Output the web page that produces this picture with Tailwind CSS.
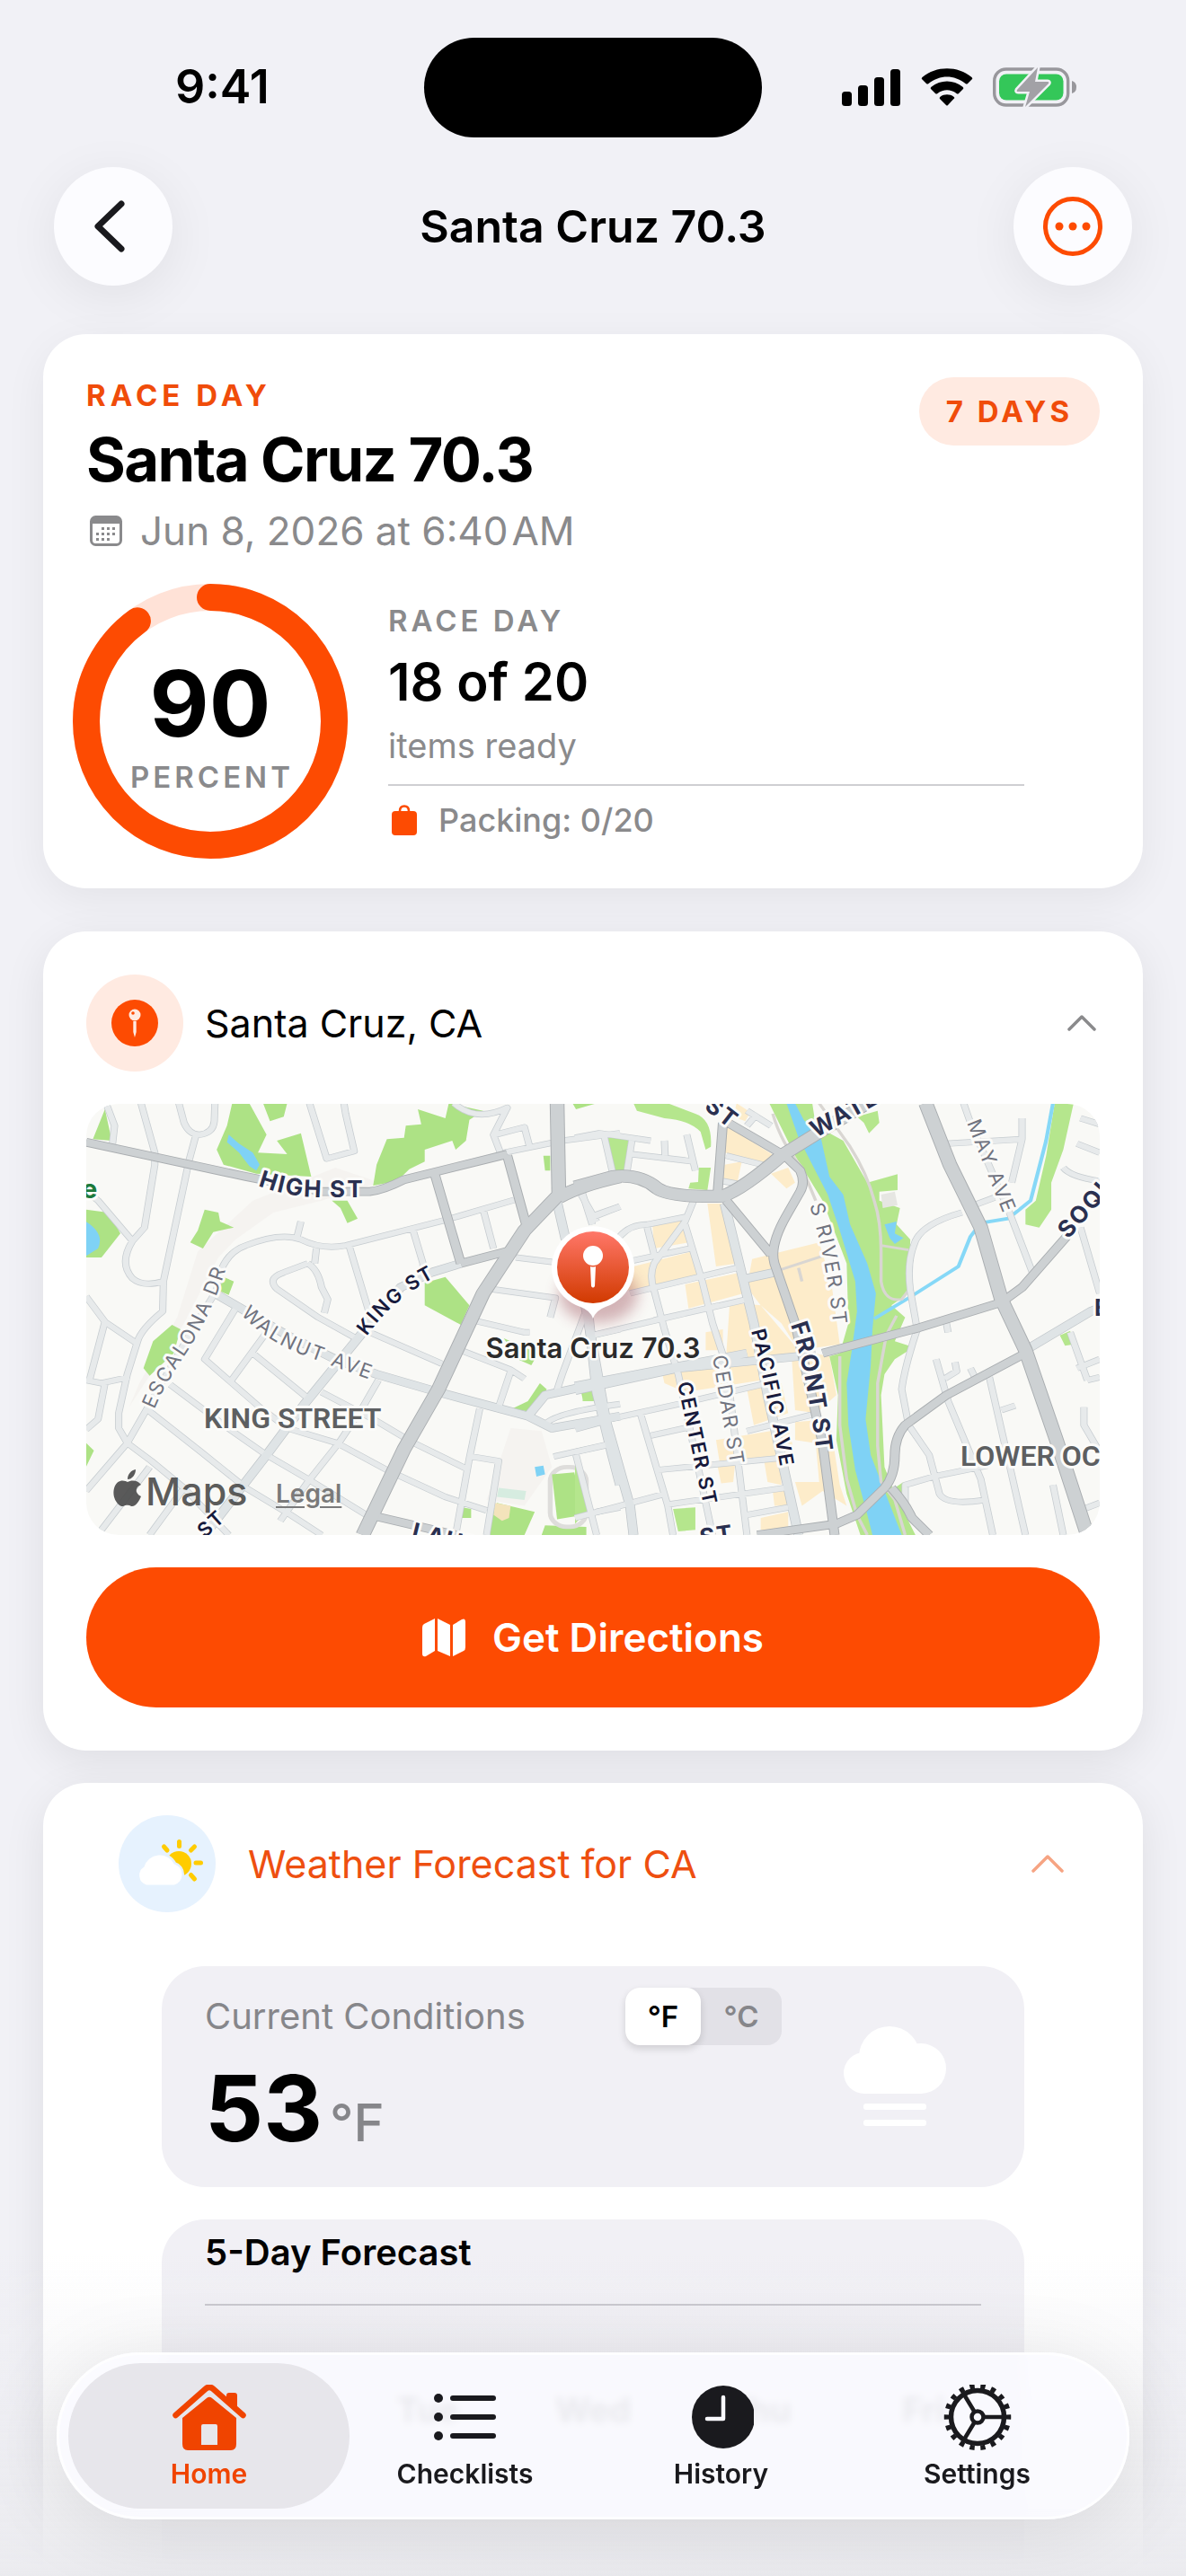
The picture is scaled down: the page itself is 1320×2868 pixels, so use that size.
<!DOCTYPE html>
<html lang="en">
<head>
<meta charset="utf-8">
<meta name="viewport" content="width=device-width, initial-scale=1">
<title>Santa Cruz 70.3</title>
<script src="https://cdn.jsdelivr.net/npm/@tailwindcss/browser@4"></script>
</head>
<body class="bg-[#f1f1f6] font-['Inter',sans-serif] text-black">
<div class="relative flex min-h-screen flex-col overflow-hidden px-12">

  <!-- Status bar -->
  <div class="grid h-[186px] shrink-0 grid-cols-[1fr_376px_1fr] items-center pt-2">
    <div class="pl-[147px] text-[52px] leading-[60px] font-semibold">9:41</div>
    <div class="h-[111px] rounded-full bg-black"></div>
    <div class="flex items-center justify-end gap-[22px] pr-[73px]">
      <svg class="h-[42px] w-[66px]" viewBox="0 0 66 42" aria-hidden="true"><rect y="26" width="11" height="16" rx="3.5"/><rect x="18" y="19" width="11" height="23" rx="3.5"/><rect x="36" y="10" width="11" height="32" rx="3.5"/><rect x="54" y="1" width="11" height="41" rx="3.5"/></svg>
      <svg class="h-[42px] w-[58px]" viewBox="0 0 58 42" aria-hidden="true"><path d="M1.5 12.500Q0 11.500 1.500 10C17-3 41-3 56.500 10q1.500 1.500 0 2.500L52 17q-1.200 1-2.500 0C37 7 21 7 8.500 17Q7.200 18 6 17Z"/><path d="M11 23Q10 22 11.500 20.700C22 12.500 36 12.500 46.500 20.700 48 22 47 23 46.500 23.500L42 28q-1.200 1-2.500 0C33 23 25 23 18.500 28q-1.300 1-2.500 0Z"/><path d="M21 34Q20 33 21.500 31.700C26 28.500 32 28.500 36.500 31.700 38 33 37 33.500 36.500 34L30 41q-1 1-2 0Z"/></svg>
      <svg class="h-[46px] w-[94px]" viewBox="0 0 94 46" aria-hidden="true"><rect x="1.700" y="3" width="82" height="40" rx="13" fill="none" stroke="#98979c" stroke-width="3.400"/><path d="M88 16q5 1.500 5 7t-5 7Z" fill="#98979c"/><rect x="7" y="8.500" width="71.500" height="29" rx="8" fill="#34c759"/><path d="M50 1 27 26q-1 2 1 2h13l-5 17L62 19q1-2-1-2H47Z" fill="#a2a1a6" stroke="#f1f1f6" stroke-width="5" paint-order="stroke" stroke-linejoin="round"/></svg>
    </div>
  </div>

  <!-- Navigation bar -->
  <header class="flex h-[132px] shrink-0 items-center justify-between px-3">
    <button type="button" aria-label="Back" class="flex size-[132px] items-center justify-center rounded-full bg-[#fcfcff] pr-2 shadow-[0_12px_60px_rgba(0,0,0,0.07)]">
      <svg class="h-[60px] w-9" viewBox="0 0 36 60" fill="none" stroke="#1a1a1e" stroke-width="7" stroke-linecap="round" stroke-linejoin="round" aria-hidden="true"><path d="M31 5 5 30l26 25"/></svg>
    </button>
    <h1 class="text-[50px] leading-[60px] font-semibold">Santa Cruz 70.3</h1>
    <button type="button" aria-label="More" class="flex size-[132px] items-center justify-center rounded-full bg-[#fcfcff] shadow-[0_12px_60px_rgba(0,0,0,0.07)]">
      <svg class="size-[66px]" viewBox="0 0 66 66" aria-hidden="true"><circle cx="33" cy="33" r="30.500" fill="none" stroke="#fd4b02" stroke-width="5"/><g fill="#fd4b02"><circle cx="18" cy="33" r="4.500"/><circle cx="33" cy="33" r="4.500"/><circle cx="48" cy="33" r="4.500"/></g></svg>
    </button>
  </header>

  <main class="flex grow flex-col pt-[54px]">

    <!-- Race summary -->
    <section class="rounded-[48px] bg-white px-12 pt-12 pb-[33px] shadow-[0_12px_48px_rgba(0,0,0,0.06)]">
      <div class="flex items-start justify-between">
        <div>
          <p class="text-[33px] leading-[40px] font-bold tracking-[5px] text-[#f04c0a]">RACE DAY</p>
          <h2 class="mt-2 text-[67px] leading-[88px] font-bold tracking-tight">Santa Cruz 70.3</h2>
          <p class="mt-2 flex items-center gap-5 text-[44px] leading-[54px] text-[#8a8a8c]">
            <svg class="ml-1 h-[34px] w-9" viewBox="0 0 36 34" aria-hidden="true"><rect x="1.500" y="1.500" width="33" height="31" rx="5" fill="none" stroke="#8a8a8c" stroke-width="3"/><path d="M2 2h32v7H2z" fill="#8a8a8c"/><g fill="#8a8a8c"><path d="M13 13h3v3h-3zM19 13h3v3h-3zM25 13h3v3h-3zM7 19h3v3H7zM13 19h3v3h-3zM19 19h3v3h-3zM25 19h3v3h-3zM7 25h3v3H7zM13 25h3v3h-3zM19 25h3v3h-3z"/></g></svg>
            Jun 8, 2026 at 6:40&#8202;AM
          </p>
        </div>
        <span class="rounded-full bg-[#ffeae1] px-[30px] py-[18px] text-[33px] leading-[40px] font-bold tracking-[4px] text-[#f04c0a]">7 DAYS</span>
      </div>
      <div class="mt-[47px] flex items-center gap-[60px] pb-[15px]">
        <div class="relative flex size-[276px] shrink-0 flex-col items-center justify-center pt-3">
          <svg class="absolute inset-0 size-full overflow-visible" viewBox="0 0 276 276" fill="none" stroke-width="30" aria-hidden="true"><circle cx="138" cy="138" r="138" stroke="#ffe2d7"/><circle cx="138" cy="138" r="138" stroke="#fd4b02" stroke-linecap="round" pathLength="100" stroke-dasharray="90 100" transform="rotate(-90 138 138)"/></svg>
          <span class="relative text-[102px] leading-[100px] font-bold">90</span>
          <span class="relative mt-3 pl-1 text-[33px] leading-[40px] font-semibold tracking-[4px] text-[#8a8a8c]">PERCENT</span>
        </div>
        <div class="grow pr-[84px]">
          <p class="text-[33px] leading-[40px] font-semibold tracking-[4px] text-[#8a8a8c]">RACE DAY</p>
          <p class="mt-3 text-[58px] leading-[72px] font-semibold">18 of 20</p>
          <p class="mt-[10px] text-[38px] leading-[50px] text-[#8a8a8c]">items ready</p>
          <hr class="mt-[18px] border-t-2 border-[#cfcfd2]">
          <p class="mt-4 flex items-center gap-6 text-[36px] leading-[44px] font-medium text-[#8a8a8c]">
            <svg class="ml-1 h-[34px] w-7" viewBox="0 0 28 34" aria-hidden="true"><rect y="7" width="28" height="27" rx="4" fill="#fd4b02"/><path d="M9 10V7q0-5.500 5-5.500T19 7v3" fill="none" stroke="#fd4b02" stroke-width="2.600"/></svg>
            Packing: 0/20
          </p>
        </div>
      </div>
    </section>

    <!-- Location -->
    <section class="mt-12 rounded-[48px] bg-white p-12 shadow-[0_12px_48px_rgba(0,0,0,0.08)]">
      <button type="button" aria-expanded="true" class="flex w-full items-center text-left">
        <span class="flex size-[108px] items-center justify-center rounded-full bg-[#ffeae1]">
          <svg class="size-[52px]" viewBox="0 0 52 52" aria-hidden="true"><circle cx="26" cy="26" r="26" fill="#fd4b02"/><circle cx="26" cy="17" r="6.500" fill="#ffeae1"/><circle cx="24" cy="15" r="1.800" fill="#fd4b02"/><path d="M24.300 24h3.400v12L26 42l-1.700-6Z" fill="#ffeae1"/></svg>
        </span>
        <span class="grow pl-6 text-[43px] leading-[60px]">Santa Cruz, CA</span>
        <svg class="mr-1 h-[18px] w-8" viewBox="0 0 32 18" fill="none" stroke="#8a8a8c" stroke-width="3.500" stroke-linecap="round" stroke-linejoin="round" aria-hidden="true"><path d="M2 16 16 2l14 14"/></svg>
      </button>

      <div class="relative mt-9 h-[480px] overflow-hidden rounded-[36px]">
        <svg class="size-full font-['Inter',sans-serif]" viewBox="0 0 1128 480" preserveAspectRatio="xMidYMid slice" role="img" aria-label="Map of Santa Cruz">
          <defs>
            <linearGradient id="pin" x2="0" y2="1"><stop stop-color="#ff7769"/><stop offset="1" stop-color="#d13a00"/></linearGradient>
            <filter id="soft" x="-50%" y="-50%" width="200%" height="200%"><feGaussianBlur stdDeviation="8"/></filter>
            <!-- west half, small streets -->
            <g id="westMinor" transform="translate(-6 -9) scale(.3827 .3333)"><path d="M75 30 98 100 92 160M175 25 215 190V230L185 440 150 485Q110 560 150 610 180 640 240 620M285 25 300 90Q315 130 345 130 385 125 388 85L390 25M335 130 315 215 240 620 238 720Q175 780 165 820L135 930 110 1060V1110L135 1160 205 1220 300 1310 430 1467M15 320 50 350 150 485M15 670 70 755 160 825M70 755 25 950M15 950 60 960 140 940M70 960 50 1080 15 1115M15 1320 135 1160 195 1040 330 770 395 650Q405 530 480 500 580 455 640 480 700 515 770 500L1060 415 1260 348M640 420 628 475M685 510 680 560M660 560 590 590Q540 610 570 645L690 740 800 810M660 560Q690 580 700 640L718 680 708 725M780 500 840 730 830 790M965 445 995 560V600M450 710 360 880 520 1040 600 1110 745 1160 890 1250 1060 1340 1180 1385M260 965 440 1120 540 1200 660 1280 830 1400M195 1050 350 1190 480 1310 610 1400 700 1467M500 860 660 1010M700 990 850 1080 960 1155 1120 1245M540 790 435 955M865 950 820 1040 750 1160 660 1290 580 1420M820 780 1050 895M1170 380 1200 510M1265 540 1370 555M1190 645 1380 675 1365 740M1140 750 1290 790H1305M1105 850 1250 915 1290 945M1250 920 1215 1040M1160 1045 1130 1210 1090 1467M1135 1205 1215 1220 1180 1467M1465 730 1400 930 1380 1000M1350 1100Q1370 1060 1568 1030M1375 1205 1530 1165M1440 1200 1500 1467M665 25 715 210 795 185 770 60 765 25M1085 25Q1150 90 1240 40L1200 130 1220 190M1205 130 1290 105 1305 170M1230 190 1400 150 1568 125M1455 330 1500 420M1490 405 1568 370M1490 800 1568 780M1500 1390 1568 1375M200 1240 60 1450M300 1310 200 1467"/></g>
            <g id="westMid" transform="translate(-6 -9) scale(.3827 .3333)"><path d="M1105 560 1020 590 930 640 820 790 650 1030 540 1200 360 1467M390 660 450 700 600 800 740 880 860 930 1040 990 1300 1070 1370 1110 1568 1070M1300 1070 1350 1000 1568 945M1475 720 1500 990 1545 1200 1568 1300M1380 330 1410 480"/></g>
            <g id="westMajor" transform="translate(-6 -9) scale(.3827 .3333)"><path d="M15 155 480 270 700 320H840Q880 315 940 280L1240 195M1030 265 1105 560M1240 200 1295 430M1105 560 1255 515M840 1400 1090 1467"/></g>
            <g id="westTrunk" transform="translate(-6 -9) scale(.3827 .3333)"><path d="M1385 25 1390 330 1290 450 1250 520 1170 660 1040 980 940 1180 820 1467M1390 340Q1450 300 1568 270"/></g>
            <!-- east half -->
            <g id="eastMinor" transform="translate(544 -9) scale(.3827 .3333)"><path d="M0 140 70 125 220 150M85 135 110 260M165 150 150 260M165 195 350 220M260 150 262 200M325 130 350 250M20 320 50 430M55 400 130 370M345 350 320 420 230 560Q215 600 230 650L260 780 300 930 400 1467M210 440 230 530M130 470Q160 430 210 430L320 405M170 550 335 510M320 430 370 620 400 760 440 900 500 1467M160 660 470 575M230 750 500 680M50 800 420 700M80 1085 300 1030 560 960M220 1135 340 1105M500 1120 690 1065M240 1250 600 1210M270 1365 610 1310M500 1400 620 1375M190 1060 270 1370 285 1467M0 1190 100 1165M0 1410 260 1330M1130 25 1150 90 1260 380 1330 590M1080 160 1300 145V75M1300 145 1270 290M1150 370 1220 340M1125 390Q1000 430 985 500 965 560 975 650L995 780Q960 900 950 980L970 1100 1030 1200 1060 1330Q1080 1370 1190 1350M1470 440 1526 660M1050 880 1085 1020 1180 1280 1215 1467M1205 940 1310 1467M1150 910 1165 945M1075 945 1110 920 1105 890M1240 1050 1280 1035M960 1380V1300L1050 1270 1200 1235M1440 790 1490 950M1460 910 1526 880M1490 950 1526 940M1480 1040V1100L1526 1190M1460 160 1526 190M1420 240Q1440 270 1526 285M1470 75 1526 95M1480 1380 1526 1360M1390 1300 1420 1467M440 200 580 240M430 285 500 300M500 100 530 60M500 50 570 100M1080 760 1085 790"/></g>
            <g id="eastMid" transform="translate(544 -9) scale(.3827 .3333)"><path d="M435 360 520 760 560 1000 650 1467M0 970 500 860M0 985 300 910 700 865M0 1110 80 1085M30 700 90 1085 160 1370 170 1467M500 610 600 585M1310 850 1500 720 1568 690"/></g>
            <g id="eastMajor" transform="translate(544 -9) scale(.3827 .3333)"><path d="M430 90 415 320M430 80 610 200 655 250Q670 290 655 320L615 400Q565 500 580 560L640 760 720 1160 755 1467M440 350 570 530M720 860 1000 775 1240 690 1300 640 1430 470M1310 860 1080 1000 960 1100Q930 1140 930 1200 930 1270 900 1310L820 1400 760 1430 530 1467M920 1310Q960 1360 980 1410L1030 1467"/></g>
            <g id="eastTrunk" transform="translate(544 -9) scale(.3827 .3333)"><path d="M0 305 110 270Q190 260 240 310 280 340 430 335 490 310 600 200L740 100 850 25M1020 25 1090 230 1180 440 1240 680 1310 850 1400 1150 1490 1467"/></g>
            <path id="pHigh" d="M191 91Q225 104 262 104T340 104"/>
            <path id="pEsc" d="M76 340Q84 318 112 276T158 176"/>
            <path id="pWal" d="M172 234Q200 265 250 283T340 316"/>
            <path id="pKing" d="M312 259Q345 212 400 187"/>
            <path id="pRiver" d="M805 113Q824 170 833 260"/>
            <path id="pMay" d="M980 21 1026 136"/>
            <path id="pPac" d="M740 253Q758 320 776 424"/>
            <path id="pCed" d="M697 281 720 420"/>
            <path id="pCen" d="M658 311 692 470"/>
            <path id="pFront" d="M784 246Q803 300 814 400"/>
          </defs>
          <rect width="1128" height="480" fill="#f9f9f6"/>
          <g transform="translate(-6 -9) scale(.3827 .3333)">
            <path fill="#f5f3f0" d="M340 520 500 350 740 240 870 290 700 350 560 390 450 480 400 540 300 760 140 1040 170 960 280 740ZM1250 1110 1340 1120 1370 1240 1290 1370 1180 1350Z"/>
            <path fill="#ade285" d="M70 45 90 150 35 145ZM440 25H490L540 130 515 190 600 195 570 150 640 125 670 270 510 260 415 230 395 180 425 100ZM530 25H600L590 70 550 85ZM1070 25 1170 50 1130 80 1120 150 1090 180 1080 150 1000 180V220L955 245 920 285 850 300 860 230 890 145 940 140 945 100 990 95 980 45 1060 75ZM730 350H775L805 410 775 425 755 375ZM360 380 400 390 405 420 445 440 385 455 355 510 318 490 340 450ZM265 765 290 780 270 860 200 935 182 910 210 820ZM415 605 445 620 430 665 400 650ZM1000 625 1060 605 1130 700 1105 765 1000 700ZM15 380 80 390 115 460 60 540H15ZM15 1160 38 1185 15 1240ZM1335 960 1355 980 1305 1055 1255 1045 1300 1020ZM1455 990 1495 980V1020L1460 1015ZM1195 1400 1210 1360 1320 1390 1290 1467H1190ZM1340 1467 1350 1435 1470 1440V1467ZM1525 135 1568 140V260L1545 255ZM1345 200H1365V250H1350ZM1110 1375 1135 1380V1410H1105ZM1430 25H1500L1440 45ZM1230 810 1330 860 1310 900 1270 880Z"/>
            <path fill="#7fd2f5" d="M430 130 460 160 500 190 520 230 510 250 490 235 460 190 425 155ZM15 420Q70 460 50 510L15 535ZM1320 1240 1345 1235 1350 1265 1325 1272Z"/>
            <rect x="1365" y="1240" width="105" height="200" rx="48" fill="none" stroke="#dedddb" stroke-width="14"/>
            <path fill="#ade285" d="M1370 1265 1435 1258 1465 1400 1385 1415Z"/>
            <path fill="#f3e3bb" d="M1205 1360 1250 1370 1245 1410 1225 1420 1200 1400Z"/>
            <path fill="#d6ece0" d="M1215 1310 1295 1320 1290 1350 1210 1340Z"/>
          </g>
          <g transform="translate(544 -9) scale(.3827 .3333)">
            <path fill="#fdecca" d="M440 100 580 200 550 225 435 190ZM435 230 485 220 470 300 430 290ZM570 260 620 240 640 290 615 310ZM385 360H430L470 560 410 570ZM225 430 320 410 330 490 230 510ZM170 570 340 520 370 600 220 640 150 650ZM320 630 480 590 490 660 330 710ZM515 545 710 490 745 620 770 830 650 850 600 760 540 700 500 640ZM450 690 540 700 650 850 740 870 760 1000 700 1060 640 1050 630 870 530 880 440 860ZM250 910 520 850 540 950 320 990 260 960ZM500 980 600 960 620 1060 520 1100ZM410 1150 620 1110 640 1200 420 1220ZM640 1090 740 1080 770 1300 790 1370 720 1320 660 1370 640 1290 710 1290 700 1160 640 1150ZM540 1410 620 1390V1450H540ZM575 1320 620 1310V1370H580ZM550 1220 600 1210V1300L560 1290ZM415 1240 465 1235 460 1290 425 1295ZM470 25 510 55 495 85 460 70ZM380 790 430 780 430 850 380 850Z"/>
            <path fill="#b5e68d" d="M565 25 640 200 720 350 790 560 795 760 770 860 740 870 765 1000 760 1150 790 1330 830 1467H990L930 1330 900 1240 890 1000 900 930 930 880 985 840 930 820 960 740 920 700 970 660 975 480 935 430 945 375 885 350 885 320 938 315 938 262 850 290 780 150 700 100 690 25ZM1395 25H1450L1420 180 1385 290V380L1350 440 1310 430V380L1340 350 1370 200ZM170 25H270L350 60Q400 80 395 170L380 180 365 120Q330 80 260 75L180 50ZM90 140 160 145 150 250 110 255ZM360 240H395L385 315 330 310 335 290 358 288ZM25 980 55 985V1020H22ZM0 1230 40 1380 0 1430ZM285 1380 350 1375V1450L300 1455ZM820 70 880 50 885 90 855 125 840 90ZM1410 800 1440 785 1450 830 1425 835ZM930 1310 955 1290 950 1350Z"/>
            <path fill="#e6e6e2" d="M890 330 930 320 938 365 895 375Z"/>
            <path fill="#7fd2f5" d="M615 25 650 140 690 230 735 330 770 450 815 620 820 720 805 850 790 960 795 1100 815 1250 850 1400 865 1467H950L890 1290 860 1200 845 1080 860 900 865 780 875 660 850 560 800 430 780 330 740 270 715 140 665 80 640 25ZM900 430 935 420 930 460 955 475 930 495 915 475Z"/>
            <path fill="none" stroke="#86d8f7" stroke-width="11" stroke-linejoin="round" d="M1390 25 1370 150 1325 350 1260 410 1180 425 1150 470 1115 570 985 665 870 745"/>
            <path fill="none" stroke="#d9d6d2" stroke-width="9" stroke-linejoin="round" d="M575 60Q600 160 660 240L700 350M710 25 800 170Q850 260 870 350 890 420 890 520V620Q900 690 950 680L970 650M890 500 970 515M935 735 905 800 880 960V1170L890 1290 930 1350 960 1467M770 870V1100L790 1280 820 1400 850 1467M600 580 720 535M650 575 660 620"/>
          </g>
          <g fill="none" stroke-linejoin="round">
            <g stroke="#c6ccd0" stroke-width="21"><use href="#westMinor"/><use href="#eastMinor"/></g>
            <g stroke="#c0c6ca" stroke-width="29"><use href="#westMid"/><use href="#eastMid"/></g>
            <g stroke="#e7eaeb" stroke-width="17"><use href="#westMinor"/><use href="#eastMinor"/></g>
            <g stroke="#dfe4e6" stroke-width="25"><use href="#westMid"/><use href="#eastMid"/></g>
            <g stroke="#a9adb0" stroke-width="29"><use href="#westMajor"/><use href="#eastMajor"/></g>
            <g stroke="#a9adb0" stroke-width="43"><use href="#westTrunk"/><use href="#eastTrunk"/></g>
            <g stroke="#cdd1d3" stroke-width="24"><use href="#westMajor"/><use href="#eastMajor"/></g>
            <g stroke="#cdd1d3" stroke-width="38"><use href="#westTrunk"/><use href="#eastTrunk"/></g>
          </g>
          <g stroke="#fbfbf9" stroke-width="6" stroke-linejoin="round" paint-order="stroke">
            <g fill="#2a3050" font-weight="700" font-size="26" letter-spacing="2">
              <text><textPath href="#pHigh">HIGH ST</textPath></text>
              <text><textPath href="#pFront">FRONT ST</textPath></text>
              <text transform="translate(687 5) rotate(38)">ST</text>
              <text transform="translate(812 38) rotate(-29)">WATER ST</text>
              <text transform="translate(1093 151) rotate(-49)">SOQUEL AVE</text>
              <text transform="translate(361 484) rotate(14)">LAUREL ST</text>
              <text x="1122" y="236">E</text>
              <text transform="translate(684 492) rotate(-8)">ST</text>
            </g>
            <g fill="#171a3c" font-weight="600" font-size="22" letter-spacing="2">
              <text><textPath href="#pKing">KING ST</textPath></text>
              <text><textPath href="#pPac">PACIFIC AVE</textPath></text>
              <text><textPath href="#pCen">CENTER ST</textPath></text>
              <text transform="translate(132 484) rotate(-42)">ST</text>
            </g>
            <g fill="#70737f" font-size="22" letter-spacing="2">
              <text><textPath href="#pEsc">ESCALONA DR</textPath></text>
              <text><textPath href="#pWal">WALNUT AVE</textPath></text>
              <text><textPath href="#pRiver">S RIVER ST</textPath></text>
              <text><textPath href="#pMay">MAY AVE</textPath></text>
              <text><textPath href="#pCed">CEDAR ST</textPath></text>
            </g>
            <g class="font-['Roboto',sans-serif]" fill="#5d5f61" font-weight="600" font-size="32">
              <text x="131" y="361">KING STREET</text>
              <text x="973" y="403">LOWER OCEAN</text>
            </g>
            <text x="-5" y="105" fill="#1d7a3b" font-weight="700" font-size="29">e</text>
          </g>
          <ellipse cx="570" cy="212" rx="44" ry="32" fill="#8c3040" opacity=".35" filter="url(#soft)"/>
          <path fill="#fff" d="M564 239q-3-9-14-13a46 46 0 1 1 28 0q-11 4-14 13Z"/>
          <circle cx="564" cy="182" r="40" fill="url(#pin)"/>
          <circle cx="564" cy="169" r="11" fill="#fff"/><path fill="#fff" d="M561 181q3 1 6 0l-1 22q-2 3-4 0Z"/>
          <text x="564" y="283" text-anchor="middle" fill="#2b2b2b" stroke="#fbfbf9" stroke-width="5" paint-order="stroke" stroke-linejoin="round" font-size="31" font-weight="600">Santa Cruz 70.3</text>
          <g fill="#4c4c4c" fill-opacity=".92">
            <path d="M61 424c-4-6-12-5-15-3-3-2-12-4-15 7-3 12 6 21 10 20 3-1 5-2 9 0 5 1 9-6 11-11-8-4-6-11 0-13ZM46 418c0-6 4-10 9-11 0 6-4 11-9 11Z"/>
            <text x="66" y="447" font-size="43" font-weight="500">Maps</text>
          </g>
        </svg>
        <a href="#legal" class="absolute bottom-[30px] left-[211px] text-[28px] leading-[32px] font-semibold text-[#7a7a7a] underline underline-offset-4">Legal</a>
      </div>

      <button type="button" class="mt-9 flex h-[156px] w-full items-center justify-center gap-[30px] rounded-[78px] bg-[#fd4b02] text-[44px] leading-[60px] font-semibold text-white">
        <svg class="h-[44px] w-12" viewBox="0 0 48 44" fill="#fff" aria-hidden="true"><path d="M14 1v36L4 43q-4 1-4-3V11q0-3 2-4ZM17 1l14 7v35l-14-6ZM34 8l10-6q4-2 4 3v28q0 3-2 4l-12 6Z"/></svg>
        Get Directions
      </button>
    </section>

    <!-- Weather -->
    <section class="mt-9 flex grow flex-col rounded-t-[48px] bg-white px-[84px] pt-9 shadow-[0_12px_48px_rgba(0,0,0,0.08)]">
      <button type="button" aria-expanded="true" class="flex items-center text-left">
        <svg class="size-[108px]" viewBox="0 0 108 108" aria-hidden="true"><circle cx="54" cy="54" r="54" fill="#e6f2fe"/><path d="M67.500 29.500v5M80.500 39l4-4M86 53h5.500M80.500 66.500l4 4.500M54 39l-3.500-4" stroke="#fc0" stroke-width="5" stroke-linecap="round"/><circle cx="67" cy="54" r="14" fill="#fc0"/><path d="M31 77.500a11 11 0 0 1-2.500-20A18 18 0 0 1 62 54.500 12 12 0 0 1 62 77.500Z" fill="#fff" stroke="#e6f2fe" stroke-width="5" paint-order="stroke"/></svg>
        <span class="grow pl-9 text-[43px] leading-[60px] text-[#ee4f10]">Weather Forecast for CA</span>
        <svg class="mr-1 h-5 w-9" viewBox="0 0 36 20" fill="none" stroke="#f6a483" stroke-width="3.500" stroke-linecap="round" stroke-linejoin="round" aria-hidden="true"><path d="M2 18 18 2l16 16"/></svg>
      </button>

      <div class="mt-[60px] flex grow flex-col gap-9 px-12">
        <div class="flex h-[246px] shrink-0 items-start rounded-[48px] bg-[#f1f0f5] pl-12">
          <div class="flex grow flex-col">
            <div class="flex items-center justify-between pt-6">
              <h3 class="text-[40px] leading-[64px] text-[#86868a]">Current Conditions</h3>
              <fieldset class="flex h-16 w-[174px] rounded-[16px] bg-[#e2e1e7] text-[33px] leading-[64px] font-semibold">
                <legend class="sr-only">Temperature unit</legend>
                <label class="relative w-[84px] rounded-[16px] bg-white text-center shadow-[0_4px_8px_rgba(0,0,0,0.14)]"><input type="radio" name="unit" checked class="absolute inset-0 size-full appearance-none">°F</label>
                <label class="relative grow text-center text-[#86868a]"><input type="radio" name="unit" class="absolute inset-0 size-full appearance-none">°C</label>
              </fieldset>
            </div>
            <p class="mt-1 flex items-baseline gap-2 text-[102px] leading-[132px] font-bold">53<span class="text-[58px] font-medium text-[#86868a]">°F</span></p>
          </div>
          <svg class="mt-[66px] mr-[86px] ml-[68px] h-[114px] w-[116px] shrink-0" viewBox="0 0 116 114" fill="#fff" aria-hidden="true"><circle cx="52" cy="35" r="34"/><circle cx="24" cy="53" r="23"/><circle cx="87" cy="48" r="28"/><path d="M24 40h63v36H24z"/><rect x="23" y="87" width="70" height="7" rx="3"/><rect x="23" y="105" width="70" height="7" rx="3"/></svg>
        </div>
        <div class="grow rounded-t-[48px] bg-[#f1f0f5] px-12 pt-3">
          <h3 class="text-[40px] leading-[50px] font-semibold">5-Day Forecast</h3>
          <hr class="mt-[32px] border-t-2 border-[#c4c3c9]">
          <ul class="-mx-7 mt-[92px] grid grid-cols-5 text-center text-[38px] leading-[48px] font-bold text-[#222]"><li>Mon</li><li>Tue</li><li>Wed</li><li>Thu</li><li>Fri</li></ul>
        </div>
      </div>
    </section>
  </main>

  <div class="pointer-events-none fixed inset-x-0 bottom-0 h-[360px] bg-linear-to-b from-[#ececf0]/0 via-[#ebebef]/40 to-[#ebebef]"></div>

  <!-- Tab bar -->
  <nav class="fixed inset-x-[63px] bottom-[63px] flex h-[186px] rounded-full bg-[#fafaff]/88 px-[27px] shadow-[0_12px_90px_rgba(0,0,0,0.1)] ring-3 ring-white/70 backdrop-blur-xs ring-inset">
    <a href="#home" aria-current="page" class="relative flex flex-1 flex-col items-center pt-9 text-[30px] leading-[36px] font-semibold text-[#f04400]">
      <span class="absolute inset-x-[-14px] inset-y-3 rounded-full bg-[#e7e6eb]"></span>
      <svg class="relative h-[74px] w-[82px]" viewBox="0 0 82 74" fill="#f04400" aria-hidden="true"><path d="M63 9h6q3 0 3 3v20L60 21v-9q0-3 3-3Z"/><path d="M3.500 34 37 4.500q4-3.500 8 0L78.500 34" fill="none" stroke="#f04400" stroke-width="6.500" stroke-linecap="round"/><path fill-rule="evenodd" d="M11 37 38 15q3-2.500 6 0l27 22v29q0 7-6 7H17q-6 0-6-7ZM34 44q-2 0-2 2v21h18V46q0-2-2-2Z"/></svg>
      <span class="relative mt-[7px]">Home</span>
    </a>
    <a href="#checklists" class="flex flex-1 flex-col items-center pt-9 text-[30px] leading-[36px] font-semibold text-[#1a1a1e]">
      <svg class="h-[74px] w-[72px]" viewBox="0 0 72 74" aria-hidden="true"><g fill="#1a1a1e"><circle cx="6" cy="15" r="5"/><circle cx="6" cy="36" r="5"/><circle cx="6" cy="57" r="5"/></g><path d="M22 15h45M22 36h45M22 57h45" stroke="#1a1a1e" stroke-width="6" stroke-linecap="round"/></svg>
      <span class="mt-[7px]">Checklists</span>
    </a>
    <a href="#history" class="flex flex-1 flex-col items-center pt-9 text-[30px] leading-[36px] font-semibold text-[#1a1a1e]">
      <svg class="h-[74px] w-[72px]" viewBox="0 0 72 74" aria-hidden="true"><circle cx="38" cy="36" r="35" fill="#1a1a1e"/><path d="M38 14v24H20" fill="none" stroke="#fafaff" stroke-width="4.500" stroke-linecap="round" stroke-linejoin="round"/></svg>
      <span class="mt-[7px]">History</span>
    </a>
    <a href="#settings" class="flex flex-1 flex-col items-center pt-9 text-[30px] leading-[36px] font-semibold text-[#1a1a1e]">
      <svg class="h-[74px] w-[76px]" viewBox="0 0 76 74" fill="none" stroke="#1a1a1e" aria-hidden="true"><circle cx="38" cy="36" r="34.500" stroke-width="5.500" pathLength="180" stroke-dasharray="4.500 5.500" stroke-dashoffset="2.250"/><circle cx="38" cy="36" r="29.500" stroke-width="5.500"/><circle cx="38" cy="36" r="6.500" stroke-width="4.500"/><path d="M45 36h22M34.500 30 23 11M34.500 42 23 61" stroke-width="4.500"/></svg>
      <span class="mt-[7px]">Settings</span>
    </a>
  </nav>
</div>
</body>
</html>
